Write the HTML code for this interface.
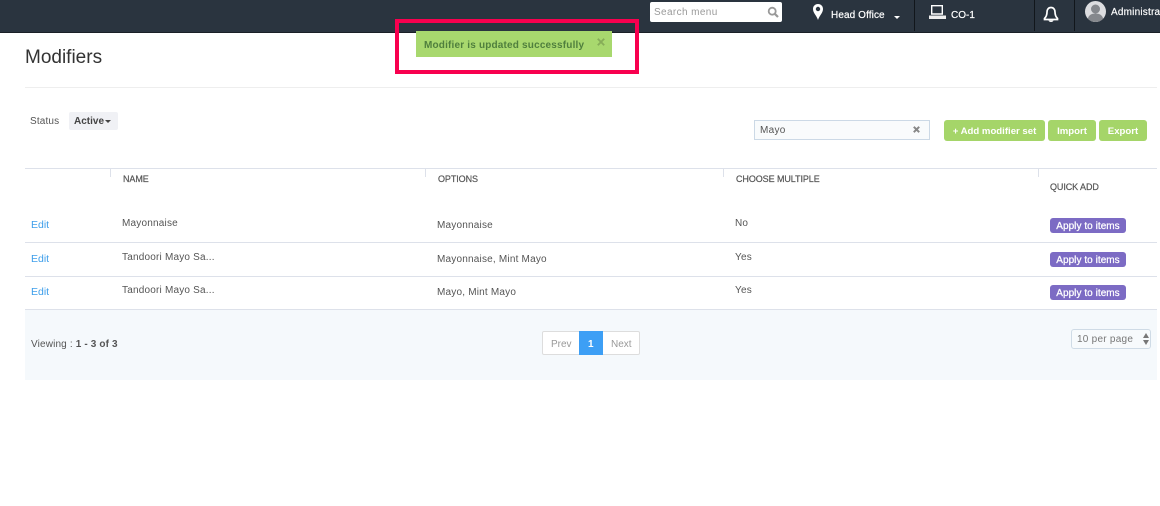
<!DOCTYPE html>
<html><head><meta charset="utf-8">
<style>
html,body{margin:0;padding:0;background:#fff;width:1160px;height:506px;overflow:hidden}
body{position:relative;font-family:"Liberation Sans",Arial,sans-serif;color:#555;font-size:10px}
.a{position:absolute;white-space:nowrap}
.r{position:absolute;display:block}
.t{letter-spacing:.2px;color:#555;font-size:10px;line-height:12px}
.h{color:#555;font-size:9px;line-height:12px;letter-spacing:-.08px;-webkit-text-stroke:.2px #555}
.e{color:#3d9eea;font-size:10.5px;line-height:12px}
.b{position:absolute;background:#a5d569;color:#fff;font-weight:bold;font-size:9.6px;text-align:center;border-radius:3px;height:21px;line-height:23px;top:120px}
.p{position:absolute;left:1050px;width:76px;height:15px;background:#7c6bc4;color:#fff;font-size:10px;line-height:17px;text-align:center;border-radius:3px;letter-spacing:.05px;-webkit-text-stroke:.25px #fff}
</style></head><body>
<div class="r" style="left:0;top:0;width:1160px;height:32px;background:#2a343f"></div>
<div class="r" style="left:0;top:32px;width:1160px;height:1px;background:#1a2027"></div>
<div class="r" style="left:650px;top:2px;width:132px;height:20px;background:#fff;border-radius:2px"></div>
<div class="a" style="left:654px;top:5px;font-size:10px;line-height:13px;color:#999;letter-spacing:.38px;margin-top:0.500px">Search menu</div>
<svg class="r" style="left:767px;top:6px" width="13" height="13" viewBox="0 0 13 13"><circle cx="5.200" cy="5.200" r="3.500" fill="none" stroke="#999" stroke-width="1.800"/><path d="M7.800 7.800l3.200 3.200" stroke="#999" stroke-width="2.200"/></svg>
<svg class="r" style="left:812px;top:3px" width="12" height="18" viewBox="0 0 12 18"><path fill-rule="evenodd" fill="#fff" d="M6 1C3 1 1 3.200 1 6c0 3.800 3.500 6.500 5 11 1.500-4.500 5-7.200 5-11 0-2.800-2-5-5-5zm0 2.800a2.200 2.200 0 1 1 0 4.400 2.200 2.200 0 0 1 0-4.400z"/></svg>
<div class="a" style="left:831px;top:9px;color:#fff;font-size:10px;line-height:13px;letter-spacing:.1px;-webkit-text-stroke:.2px #fff">Head Office</div>
<div class="r" style="left:894px;top:16px;border:3.500px solid transparent;border-top:3px solid #fff;border-bottom:0"></div>
<div class="r" style="left:914px;top:0;width:1px;height:31px;background:#11161b"></div>
<svg class="r" style="left:929px;top:5px" width="17" height="14" viewBox="0 0 17 14"><path d="M2.700.7h10.600v8.300H2.700z" fill="none" stroke="#fff" stroke-width="1.400"/><path d="M0 10.500h17V14H0z" fill="#eee"/></svg>
<div class="a" style="left:951px;top:9px;color:#fff;font-size:10px;line-height:13px;-webkit-text-stroke:.2px #fff">CO-1</div>
<div class="r" style="left:1034px;top:0;width:1px;height:31px;background:#11161b"></div>
<svg class="r" style="left:1043px;top:6px" width="16" height="17" viewBox="0 0 16 17"><path d="M8 1.500c-2.500 0-4 2-4 4.500 0 3-1 5-2.500 6.500v1h13v-1C13 11 12 9 12 6c0-2.500-1.500-4.500-4-4.500z" fill="none" stroke="#fff" stroke-width="1.700"/><path d="M5.500 14.500c.5 2 4.500 2 5 0z" fill="#fff"/></svg>
<div class="r" style="left:1074px;top:0;width:1px;height:31px;background:#11161b"></div>
<svg class="r" style="left:1085px;top:1px" width="21" height="21" viewBox="0 0 21 21"><circle cx="10.500" cy="10.500" r="10.500" fill="#dcdde0"/><circle cx="10.500" cy="8" r="4.500" fill="#85888d"/><path d="M2.800 17.800c1-4 4-5.300 7.700-5.300s6.700 1.300 7.700 5.300c-2 2-4.700 3.200-7.700 3.200s-5.700-1.200-7.700-3.200z" fill="#85888d"/></svg>
<div class="a" style="left:1111px;top:6px;color:#fff;font-size:10px;line-height:13px;letter-spacing:.2px;-webkit-text-stroke:.15px #fff">Administrator</div>

<div class="a" style="left:25px;top:47px;font-size:19px;line-height:22px;color:#333">Modifiers</div>
<div class="r" style="left:25px;top:87px;width:1132px;height:1px;background:#eee"></div>

<div class="a" style="left:30px;top:115px;font-size:10px;line-height:13px;color:#555;letter-spacing:.15px">Status</div>
<div class="r" style="left:69px;top:112px;width:49px;height:18px;background:#f0f1f5;border-radius:2px"></div>
<div class="a" style="left:74px;top:115px;font-size:10px;line-height:13px;color:#444;font-weight:bold">Active</div>
<div class="r" style="left:105px;top:120px;border:3px solid transparent;border-top:3px solid #444;border-bottom:0"></div>

<div class="r" style="left:754px;top:120px;width:174px;height:18px;background:#f9fbfc;border:1px solid #ccd9e6"></div>
<div class="a" style="left:760px;top:124px;font-size:10px;line-height:13px;color:#555;letter-spacing:.3px">Mayo</div>
<svg class="r" style="left:913px;top:126px" width="7" height="7" viewBox="0 0 7 7"><path d="M.8.8l5.400 5.400M6.200.8L.8 6.200" stroke="#888" stroke-width="2"/></svg>
<div class="b" style="left:944px;width:101px">+ Add modifier set</div>
<div class="b" style="left:1048px;width:48px">Import</div>
<div class="b" style="left:1099px;width:48px">Export</div>

<div class="r" style="left:25px;top:168px;width:1132px;height:1px;background:#dde1ea"></div>
<div class="r" style="left:110px;top:168px;width:1px;height:9px;background:#dde1ea"></div>
<div class="r" style="left:425px;top:168px;width:1px;height:9px;background:#dde1ea"></div>
<div class="r" style="left:723px;top:168px;width:1px;height:9px;background:#dde1ea"></div>
<div class="r" style="left:1038px;top:168px;width:1px;height:9px;background:#dde1ea"></div>
<div class="a h" style="left:123px;top:173px">NAME</div>
<div class="a h" style="left:438px;top:173px">OPTIONS</div>
<div class="a h" style="left:736px;top:173px">CHOOSE MULTIPLE</div>
<div class="a h" style="left:1050px;top:181px">QUICK ADD</div>

<div class="a e" style="left:31px;top:219px">Edit</div>
<div class="a t" style="left:122px;top:218px">Mayonnaise</div>
<div class="a t" style="left:437px;top:220px">Mayonnaise</div>
<div class="a t" style="left:735px;top:218px">No</div>
<div class="p" style="top:218px">Apply to items</div>
<div class="r" style="left:25px;top:242px;width:1132px;height:1px;background:#dde1ea"></div>

<div class="a e" style="left:31px;top:253px">Edit</div>
<div class="a t" style="left:122px;top:252px">Tandoori Mayo Sa...</div>
<div class="a t" style="left:437px;top:254px">Mayonnaise, Mint Mayo</div>
<div class="a t" style="left:735px;top:252px">Yes</div>
<div class="p" style="top:252px">Apply to items</div>
<div class="r" style="left:25px;top:276px;width:1132px;height:1px;background:#dde1ea"></div>

<div class="a e" style="left:31px;top:286px">Edit</div>
<div class="a t" style="left:122px;top:285px">Tandoori Mayo Sa...</div>
<div class="a t" style="left:437px;top:287px">Mayo, Mint Mayo</div>
<div class="a t" style="left:735px;top:285px">Yes</div>
<div class="p" style="top:285px">Apply to items</div>

<div class="r" style="left:25px;top:309px;width:1132px;height:71px;background:#f5f9fc"></div>
<div class="r" style="left:25px;top:309px;width:1132px;height:1px;background:#dde1ea"></div>
<div class="a" style="left:31px;top:338px;font-size:10px;line-height:13px;color:#555;letter-spacing:.15px">Viewing : <b style="font-weight:bold">1 - 3 of 3</b></div>

<div class="r" style="left:542px;top:331px;width:96px;height:22px;background:#fff;border:1px solid #ddd;border-radius:2px"></div>
<div class="a" style="left:551px;top:338px;font-size:10px;line-height:13px;color:#999">Prev</div>
<div class="r" style="left:579px;top:331px;width:24px;height:24px;background:#3d9ff5"></div>
<div class="a" style="left:588px;top:338px;font-size:10px;line-height:13px;color:#fff;font-weight:bold">1</div>
<div class="a" style="left:611px;top:338px;font-size:10px;line-height:13px;color:#999">Next</div>

<div class="r" style="left:1071px;top:329px;width:78px;height:18px;background:#f7fafc;border:1px solid #cfdbe6;border-radius:3px"></div>
<div class="a" style="left:1077px;top:333px;font-size:10px;line-height:13px;color:#777;letter-spacing:.25px">10 per page</div>
<div class="r" style="left:1143px;top:333px;border:3px solid transparent;border-bottom:5px solid #777;border-top:0"></div>
<div class="r" style="left:1143px;top:340px;border:3px solid transparent;border-top:5px solid #777;border-bottom:0"></div>

<div class="r" style="left:416px;top:31px;width:196px;height:26px;background:#a8d86e"></div>
<div class="a" style="left:424px;top:39px;font-size:10px;line-height:13px;font-weight:bold;color:#4f7f3d;letter-spacing:.18px">Modifier is updated successfully</div>
<svg class="r" style="left:597px;top:38px" width="8" height="8" viewBox="0 0 8 8"><path d="M.8.8l6.400 6.400M7.200.8L.8 7.200" stroke="#86ad58" stroke-width="1.800"/></svg>
<div class="r" style="left:395px;top:19px;width:236px;height:47px;border:4px solid #f8004f"></div>
</body></html>
